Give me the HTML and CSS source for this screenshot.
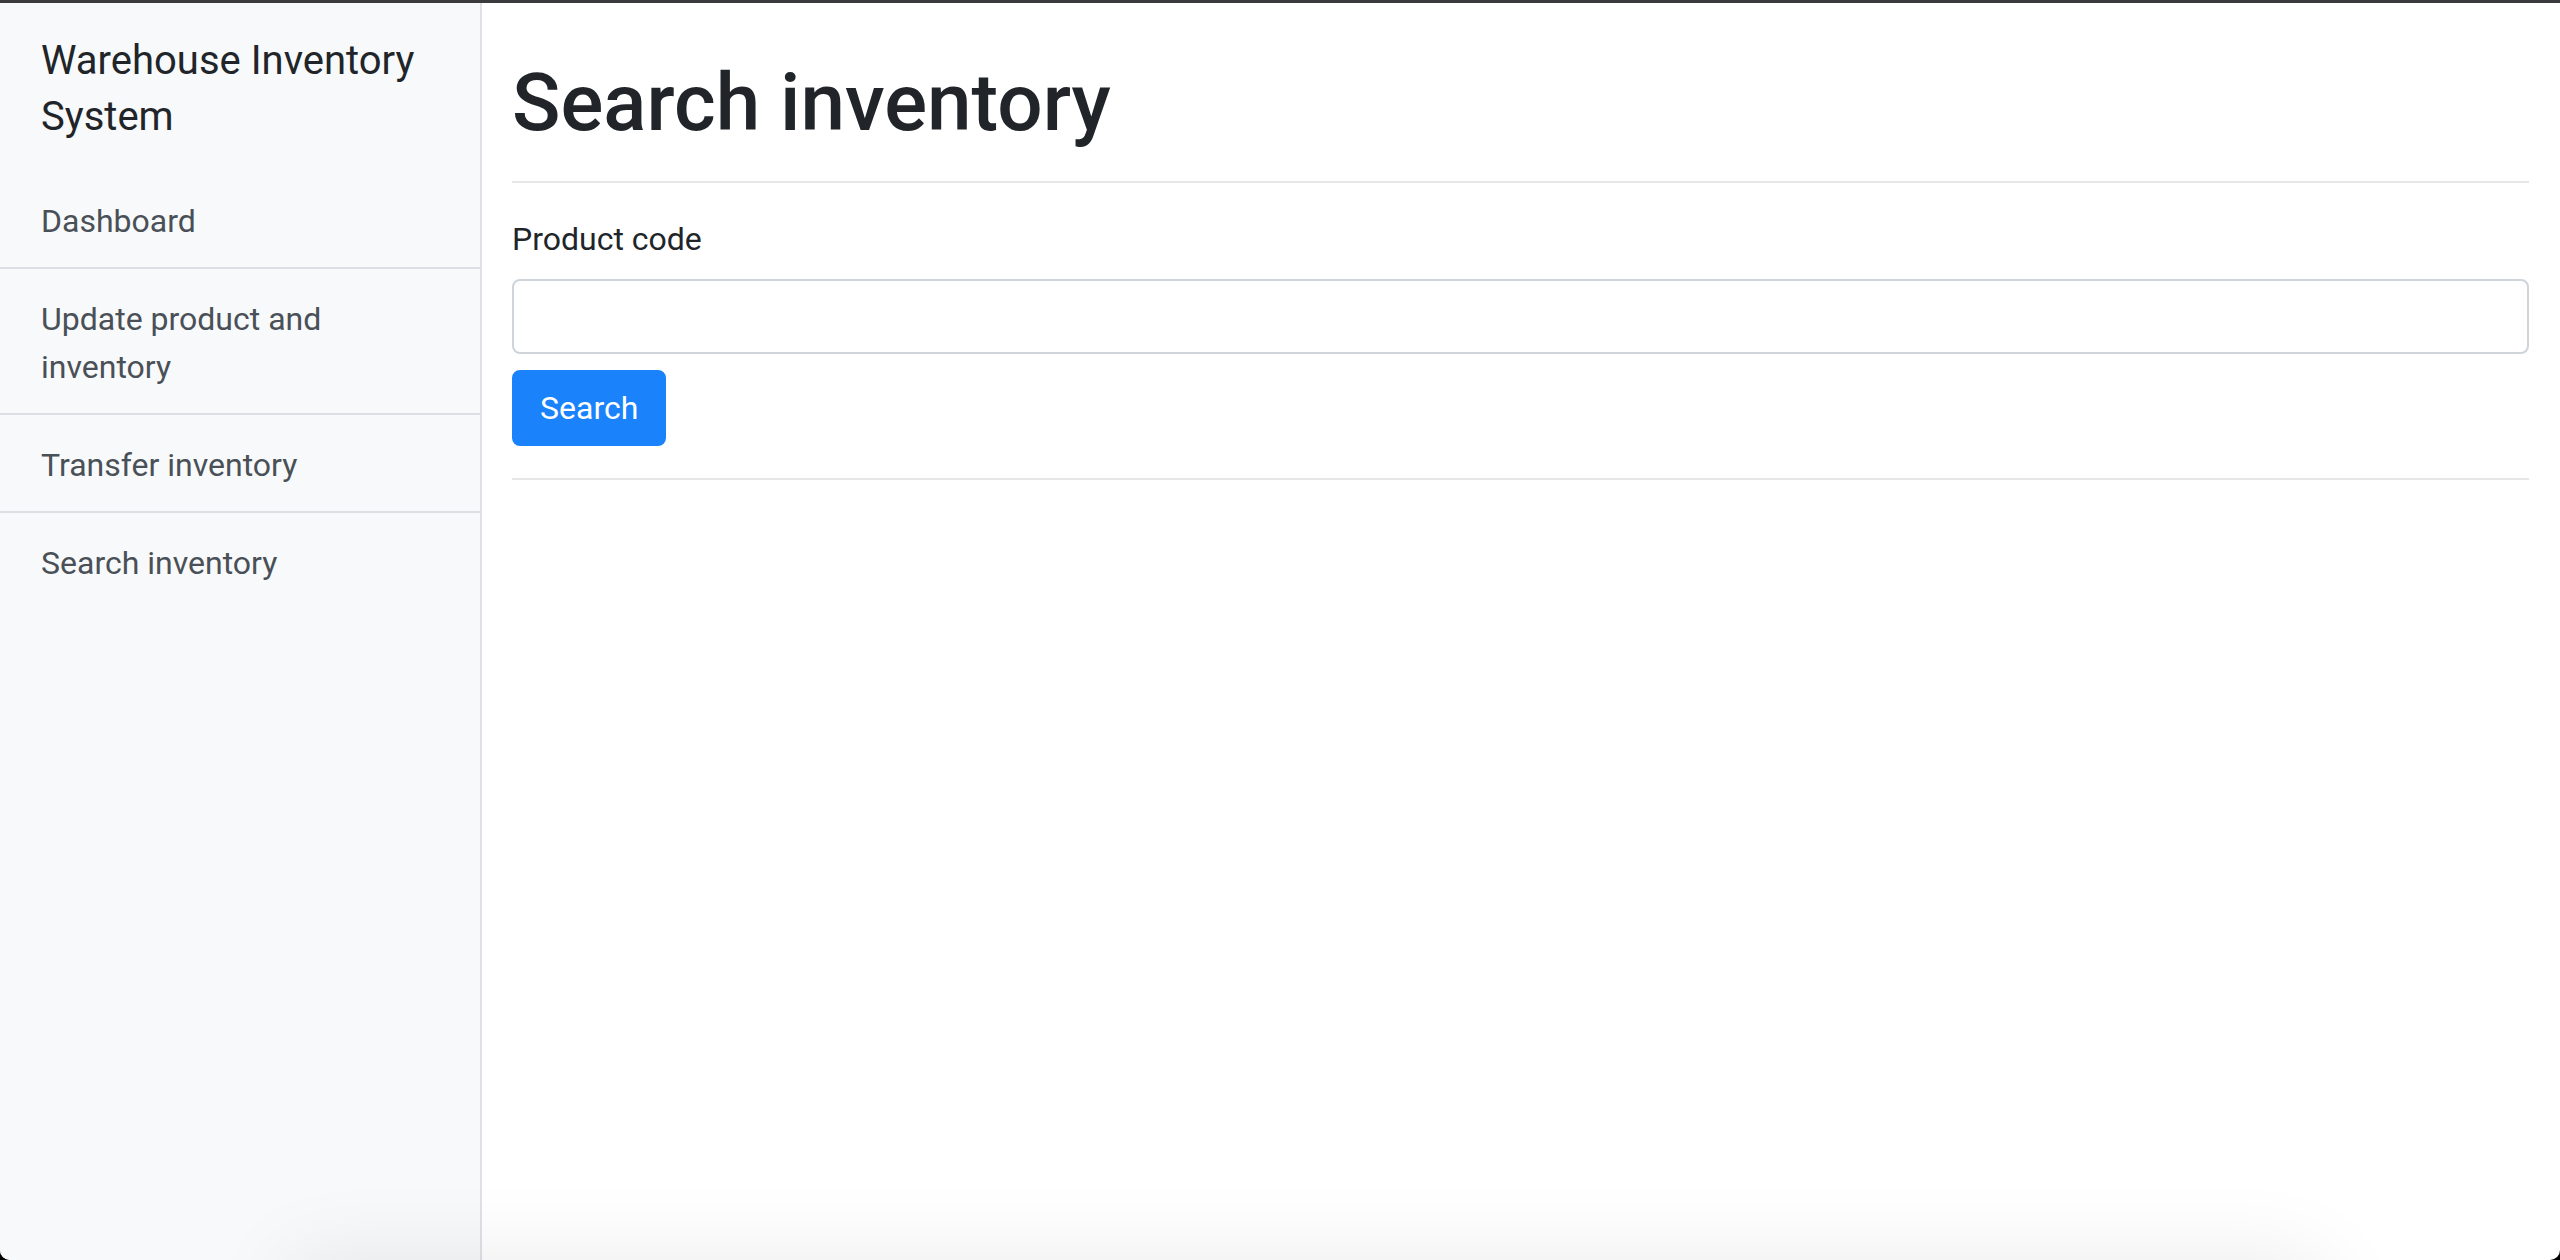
FILE: index.html
```html
<!DOCTYPE html>
<html lang="en">
<head>
<meta charset="utf-8">
<title>Search inventory</title>
<link rel="stylesheet" href="styles.css">
</head>
<body>
<div class="window">
  <aside class="sidebar">
    <div class="brand">Warehouse Inventory System</div>
    <nav class="nav">
      <a class="nav-item" href="#">Dashboard</a>
      <a class="nav-item" href="#">Update product and inventory</a>
      <a class="nav-item" href="#">Transfer inventory</a>
      <a class="nav-item last" href="#">Search inventory</a>
    </nav>
  </aside>
  <main class="main">
    <h1 class="title">Search inventory</h1>
    <hr class="rule">
    <form class="form">
      <label class="label" for="code">Product code</label>
      <input class="input" id="code" type="text">
      <button class="btn" type="button">Search</button>
    </form>
    <hr class="rule">
  </main>
  <div class="shadow"></div>
</div>
</body>
</html>
```

FILE: styles.css
```css
* { box-sizing: border-box; }
html, body { margin: 0; padding: 0; }
body {
  width: 2560px;
  height: 1260px;
  overflow: hidden;
  background: #000000;
  font-family: Roboto, "Liberation Sans", sans-serif;
  color: #212529;
}
.window {
  position: relative;
  display: flex;
  height: 1260px;
  background: #ffffff;
  border-top: 3px solid #3b3b3d;
  border-radius: 0 0 10px 10px;
  overflow: hidden;
}
.sidebar {
  width: 482px;
  flex: none;
  background: #f8f9fa;
  border-right: 2px solid #dee2e6;
}
.brand {
  padding: 30px 30px 0 41px;
  font-size: 40px;
  line-height: 56px;
  color: #212529;
  margin-bottom: 26px;
}
.nav { display: flex; flex-direction: column; }
.nav-item {
  display: block;
  padding: 26px 40px 22px 41px;
  font-size: 32px;
  line-height: 48px;
  color: #495057;
  text-decoration: none;
  border-bottom: 2px solid #dcdfe3;
}
.nav-item.last { border-bottom: none; }
.main {
  flex: 1;
  padding: 52px 31px 0 30px;
}
.title {
  margin: 0;
  font-size: 80px;
  line-height: 96px;
  font-weight: 500;
  color: #212529;
}
.rule {
  margin: 30px 0 32px 0;
  border: 0;
  border-top: 2px solid #e6e6e6;
  height: 0;
}
.form { display: flex; flex-direction: column; align-items: flex-start; }
.label {
  font-size: 32px;
  line-height: 48px;
  margin-bottom: 16px;
  color: #212529;
}
.input {
  width: 100%;
  height: 75px;
  border: 2px solid #ced4da;
  border-radius: 8px;
  background: #fff;
  font-size: 32px;
  padding: 0 24px;
  margin: 0 0 16px 0;
}
.btn {
  height: 76px;
  padding: 0 26px;
  border: 2px solid #1a82fb;
  border-radius: 8px;
  background: #1a82fb;
  color: #fff;
  font-family: inherit;
  font-size: 32px;
  line-height: 48px;
  margin-bottom: 32px;
}
.form + .rule { margin-top: 0; }
.shadow {
  position: absolute;
  left: 330px;
  width: 1950px;
  top: 1300px;
  height: 80px;
  box-shadow: 0 0 90px 40px rgba(0, 0, 0, 0.09);
  pointer-events: none;
}
```
